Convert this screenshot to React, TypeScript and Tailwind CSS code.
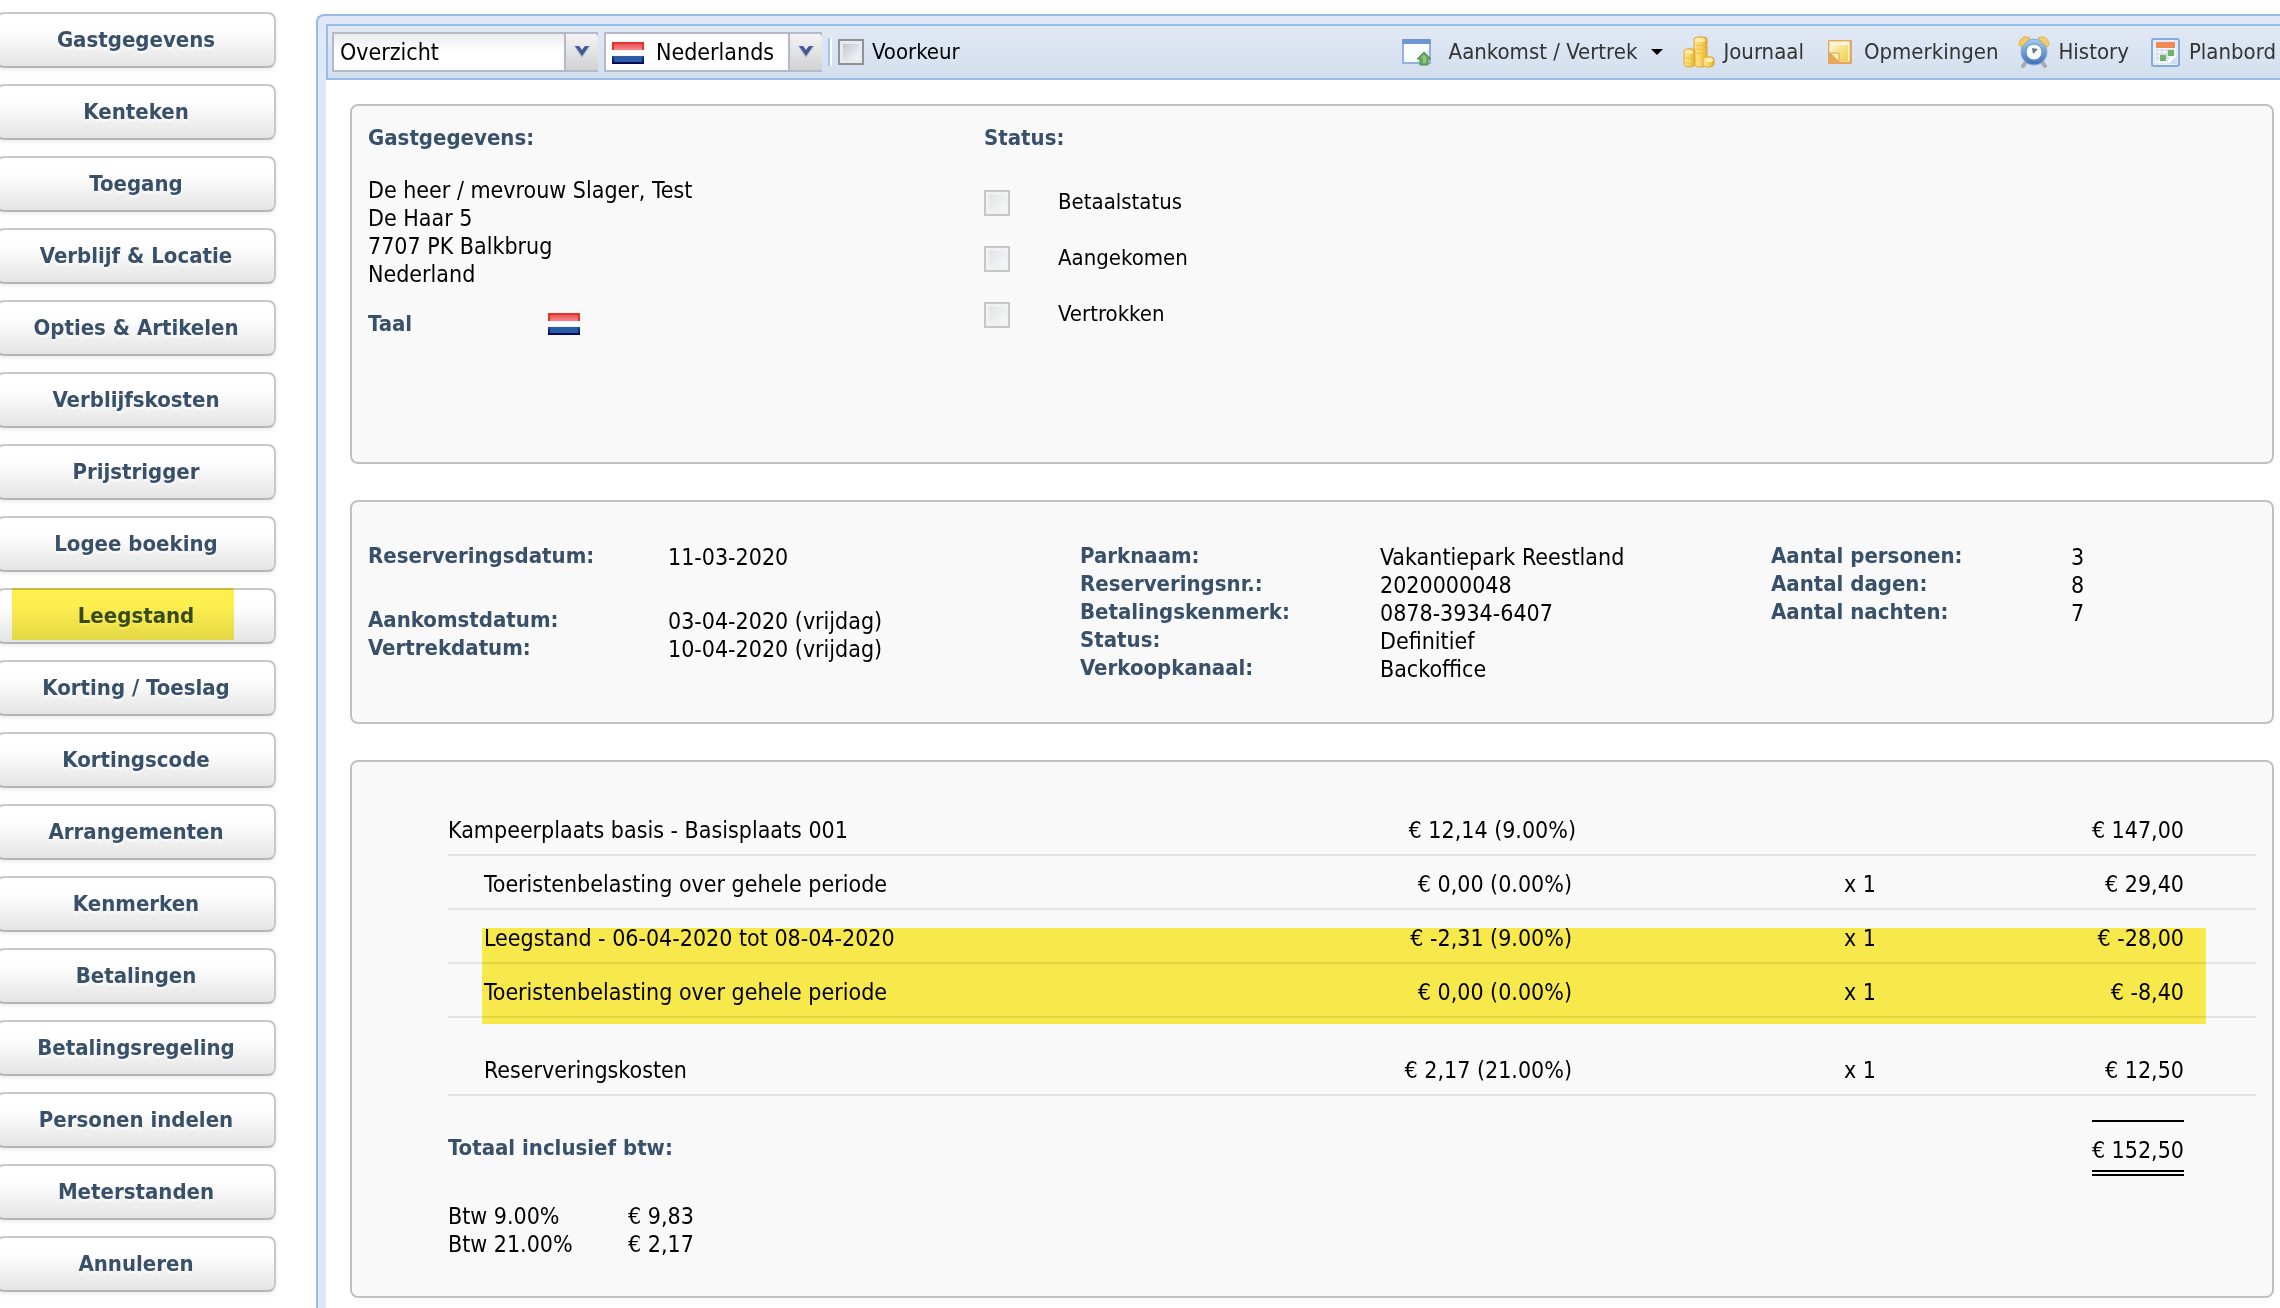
import type { ReactNode } from 'react';

const MENU = [
  'Gastgegevens',
  'Kenteken',
  'Toegang',
  'Verblijf & Locatie',
  'Opties & Artikelen',
  'Verblijfskosten',
  'Prijstrigger',
  'Logee boeking',
  'Leegstand',
  'Korting / Toeslag',
  'Kortingscode',
  'Arrangementen',
  'Kenmerken',
  'Betalingen',
  'Betalingsregeling',
  'Personen indelen',
  'Meterstanden',
  'Annuleren',
];

const STATUSES = ['Betaalstatus', 'Aangekomen', 'Vertrokken'];

const COSTS = [
  { name: 'Kampeerplaats basis - Basisplaats 001', price: '€ 12,14 (9.00%)', count: '', total: '€ 147,00', kind: 'main' },
  { name: 'Toeristenbelasting over gehele periode', price: '€ 0,00 (0.00%)', count: 'x 1', total: '€ 29,40', kind: 'sub' },
  { name: 'Leegstand - 06-04-2020 tot 08-04-2020', price: '€ -2,31 (9.00%)', count: 'x 1', total: '€ -28,00', kind: 'sub' },
  { name: 'Toeristenbelasting over gehele periode', price: '€ 0,00 (0.00%)', count: 'x 1', total: '€ -8,40', kind: 'sub' },
  { name: 'Reserveringskosten', price: '€ 2,17 (21.00%)', count: 'x 1', total: '€ 12,50', kind: 'extra' },
];

const VAT = [
  ['Btw 9.00%', '€ 9,83'],
  ['Btw 21.00%', '€ 2,17'],
];

function Flag() {
  return (
    <svg width="32" height="22" viewBox="0 0 32 22" role="img" aria-label="Nederlands">
      <defs>
        <linearGradient id="flagBlue" x1="0" y1="0" x2="0" y2="1">
          <stop offset="0" stopColor="#1d4c94" />
          <stop offset="1" stopColor="#00004f" />
        </linearGradient>
        <linearGradient id="flagShine" x1="0" y1="0" x2="0" y2="1">
          <stop offset="0" stopColor="#e9535a" />
          <stop offset="1" stopColor="#f28a8c" />
        </linearGradient>
      </defs>
      <rect width="32" height="8" fill="#e23427" />
      <rect y="8" width="32" height="6" fill="#f3f3f6" />
      <rect y="14" width="32" height="8" fill="url(#flagBlue)" />
      <rect x="2" y="2" width="28" height="6" fill="url(#flagShine)" />
      <rect x="2" y="9" width="28" height="4" fill="#fff" />
      <rect x="2" y="14" width="28" height="6" fill="#2c5ca6" />
    </svg>
  );
}

function WindowIcon() {
  return (
    <svg width="32" height="32" viewBox="0 0 32 32" aria-hidden="true">
      <rect x="1" y="3" width="29" height="25" rx="1" fill="#8fb0e0" />
      <rect x="1" y="3" width="29" height="5" rx="1" fill="#6f96d4" />
      <rect x="3" y="8" width="25" height="18" fill="#fbfcfe" />
      <path d="M15 26 28 13v13z" fill="#e3e9f5" />
      <path d="m23 16 7 7h-3v6h-8v-6h-3z" fill="#6aaa5e" stroke="#4f8f4b" strokeLinejoin="round" />
      <path d="m23 19 3 3h-1v5h-3v-5h-2z" fill="#93c884" />
    </svg>
  );
}

function CoinsIcon() {
  return (
    <svg width="32" height="32" viewBox="0 0 32 32" aria-hidden="true">
      <defs>
        <linearGradient id="coin" x1="0" x2="1">
          <stop offset="0" stopColor="#fde89a" />
          <stop offset=".6" stopColor="#f6cf52" />
          <stop offset="1" stopColor="#e3a92f" />
        </linearGradient>
      </defs>
      <g fill="url(#coin)" stroke="#e0a436">
        <path d="M11 3v25c0 4 13 4 13 0V3c0-3-13-3-13 0z" />
        <path d="M1 15v13c0 4 11 4 11 0V15c0-3-11-3-11 0z" />
        <path d="M20 23v5c0 4 11 4 11 0v-5c0-3-11-3-11 0z" />
      </g>
      <g fill="none" stroke="#ecc050">
        <path d="M12 8c2 2 9 2 11 0M12 12c2 2 9 2 11 0M12 16c2 2 9 2 11 0" />
        <path d="M2 21c2 2 7 2 9 0M2 26c2 2 7 2 9 0" />
      </g>
      <g fill="#fff0b0">
        <ellipse cx="17" cy="4" rx="5" ry="2" />
        <ellipse cx="6" cy="16" rx="4" ry="2" />
        <ellipse cx="26" cy="24" rx="4" ry="2" />
      </g>
    </svg>
  );
}

function NoteIcon() {
  return (
    <svg width="32" height="32" viewBox="0 0 32 32" aria-hidden="true">
      <defs>
        <linearGradient id="note" x1="0" y1="0" x2="1" y2="1">
          <stop offset="0" stopColor="#fdf3c4" />
          <stop offset="1" stopColor="#f1cf45" />
        </linearGradient>
      </defs>
      <rect x="4" y="4" width="24" height="24" rx="1" fill="#e7a45c" />
      <rect x="5" y="5" width="21" height="21" fill="#f5d3a2" />
      <rect x="6" y="6" width="19" height="19" fill="#fff6dc" />
      <rect x="8" y="9" width="16" height="16" fill="url(#note)" />
      <path d="M5 16 16 27H5z" fill="#e9a659" />
      <path d="M6 17h9v9z" fill="#fdf0b4" stroke="#dda14a" />
    </svg>
  );
}

function ClockIcon() {
  return (
    <svg width="32" height="32" viewBox="0 0 32 32" aria-hidden="true">
      <defs>
        <linearGradient id="clock" x1="0" y1="0" x2="0" y2="1">
          <stop offset="0" stopColor="#a8cbec" />
          <stop offset="1" stopColor="#3a6fb5" />
        </linearGradient>
      </defs>
      <path d="m8 26-3 4M24 26l3 4" stroke="#a9adb3" strokeWidth="4" strokeLinecap="round" />
      <circle cx="16" cy="16" r="13" fill="url(#clock)" stroke="#7fa8d8" />
      <path d="M1 9c0-5 4-9 8-8l3 1-9 9z" fill="#f3cd6b" stroke="#e0b04d" />
      <path d="M31 9c0-5-4-9-8-8l-3 1 9 9z" fill="#f3cd6b" stroke="#e0b04d" />
      <circle cx="16" cy="16" r="8" fill="#f8fafc" stroke="#5f91cc" />
      <path d="m14 12 1 6 5-5z" fill="#6b7683" />
    </svg>
  );
}

function PlannerIcon() {
  return (
    <svg width="32" height="32" viewBox="0 0 32 32" aria-hidden="true">
      <rect x="3" y="3" width="27" height="27" rx="2" fill="#fff" stroke="#86a9de" strokeWidth="2" />
      <rect x="5" y="5" width="23" height="23" fill="#f3f6fc" stroke="#cfddf3" />
      <rect x="7" y="6" width="19" height="6" fill="#f28a55" />
      <path d="M7 14h19M7 18h19M7 22h19M8 13v13M13 13v13M18 13v13M23 13v13" stroke="#c6d2e8" />
      <rect x="19" y="14" width="6" height="6" fill="#6db464" />
      <rect x="11" y="19" width="6" height="6" fill="#6db464" />
      <path d="m20 28 8-8v8z" fill="#c9dbf5" />
      <path d="m20 27 1-6 6-1z" fill="#fff" />
    </svg>
  );
}

function SelectArrow() {
  return (
    <span className="pointer-events-none absolute inset-y-0.5 right-0 flex w-[34px] items-center justify-center rounded-tr border-l-2 border-[#b5b8c8] bg-linear-to-b from-[#f4f4f4] to-[#d2d2d2]">
      <svg width="18" height="14" viewBox="0 0 18 14" aria-hidden="true">
        <path d="M1 1h5l3 4 3-4h5L9 13z" fill="#a9b8d8" />
        <path d="M2 1h4l3 4 3-4h4L9 11z" fill="#3f5a95" />
      </svg>
    </span>
  );
}

function ToolButton({ icon, children }: { icon: ReactNode; children: ReactNode }) {
  return (
    <button type="button" className="flex h-10 items-center gap-2 text-[22px] leading-7 whitespace-nowrap text-[#333]">
      {icon}
      {children}
    </button>
  );
}

function Toolbar() {
  return (
    <div className="flex h-14 items-center justify-between border-y-2 border-l-2 border-[#99bbe8] bg-linear-to-b from-[#e1e8f4] to-[#d3dfee] pr-1 pl-1">
      <div className="flex items-center gap-1.5">
        <div className="relative h-10 w-[266px]">
          <select
            aria-label="Weergave"
            className="h-10 w-full appearance-none border-2 border-[#b5b8c8] bg-white bg-linear-to-b from-[#eaedec] to-white to-50% pl-1.5 text-[23px] leading-7 text-black"
          >
            <option>Overzicht</option>
          </select>
          <SelectArrow />
        </div>
        <div className="relative h-10 w-[218px]">
          <select
            aria-label="Taal"
            className="h-10 w-full appearance-none border-2 border-[#b5b8c8] bg-white pl-[50px] text-[23px] leading-7 text-black"
          >
            <option>Nederlands</option>
          </select>
          <span className="pointer-events-none absolute top-2.5 left-2">
            <Flag />
          </span>
          <SelectArrow />
        </div>
        <span className="h-7 w-1 border-r-2 border-l-2 border-r-white border-l-[#98c8ff]" />
        <label className="flex items-center gap-2 text-[22px] leading-7 text-black">
          <input
            type="checkbox"
            className="size-[26px] appearance-none border-2 border-[#8f9299] bg-linear-to-br from-[#b9bfca] to-white shadow-[inset_0_0_0_3px_#e9eaec]"
          />
          Voorkeur
        </label>
      </div>
      <div className="flex items-center gap-5">
        <ToolButton icon={<WindowIcon />}>
          <span className="pl-2">Aankomst / Vertrek</span>
          <svg width="12" height="8" viewBox="0 0 12 8" className="ml-1.5" aria-hidden="true">
            <path d="M0 1h12L6 7z" fill="#000" />
          </svg>
        </ToolButton>
        <ToolButton icon={<CoinsIcon />}>Journaal</ToolButton>
        <ToolButton icon={<NoteIcon />}>Opmerkingen</ToolButton>
        <ToolButton icon={<ClockIcon />}>History</ToolButton>
        <ToolButton icon={<PlannerIcon />}>Planbord</ToolButton>
      </div>
    </div>
  );
}

function Panel({ className, children }: { className: string; children: ReactNode }) {
  return <section className={`rounded-lg border-2 border-[#c1c1c1] bg-[#f9f9f9] ${className}`}>{children}</section>;
}

function Heading({ children }: { children: ReactNode }) {
  return <h2 className="text-[22px] leading-7 font-bold text-[#385069]">{children}</h2>;
}

function Fields({ items }: { items: string[][] }) {
  return (
    <dl className="grid grid-cols-[300px_1fr] content-start">
      {items.map(([label, value]) => (
        <div key={label} className="contents">
          <dt className="text-[22px] leading-7 font-bold text-[#385069]">{label}</dt>
          <dd className="pt-0.5 leading-[26px] whitespace-nowrap">{value}</dd>
        </div>
      ))}
    </dl>
  );
}

function GuestPanel() {
  return (
    <Panel className="grid min-h-[360px] grid-cols-[616fr_1288fr] pt-[18px] pl-4">
      <div>
        <Heading>Gastgegevens:</Heading>
        <address className="mt-6 leading-7 not-italic">
          De heer / mevrouw Slager, Test
          <br />
          De Haar 5
          <br />
          7707 PK Balkbrug
          <br />
          Nederland
        </address>
        <div className="mt-[22px] grid grid-cols-[180px_1fr] items-center">
          <Heading>Taal</Heading>
          <Flag />
        </div>
      </div>
      <div>
        <Heading>Status:</Heading>
        <div className="mt-9 flex flex-col items-start gap-7">
          {STATUSES.map((s) => (
            <label key={s} className="flex items-end gap-12 text-[22px] leading-7">
              <input
                type="checkbox"
                disabled
                className="size-[26px] appearance-none border-2 border-[#c6c6c6] bg-linear-to-br from-[#dcdfe4] to-[#fbfbfb] shadow-[inset_0_0_0_3px_#f1f1f1]"
              />
              {s}
            </label>
          ))}
        </div>
      </div>
    </Panel>
  );
}

function BookingPanel() {
  return (
    <Panel className="grid min-h-56 grid-cols-[712fr_691fr_501fr] pt-10 pl-4">
      <div className="flex flex-col gap-9">
        <Fields items={[['Reserveringsdatum:', '11-03-2020']]} />
        <Fields
          items={[
            ['Aankomstdatum:', '03-04-2020 (vrijdag)'],
            ['Vertrekdatum:', '10-04-2020 (vrijdag)'],
          ]}
        />
      </div>
      <Fields
        items={[
          ['Parknaam:', 'Vakantiepark Reestland'],
          ['Reserveringsnr.:', '2020000048'],
          ['Betalingskenmerk:', '0878-3934-6407'],
          ['Status:', 'Definitief'],
          ['Verkoopkanaal:', 'Backoffice'],
        ]}
      />
      <Fields
        items={[
          ['Aantal personen:', '3'],
          ['Aantal dagen:', '8'],
          ['Aantal nachten:', '7'],
        ]}
      />
    </Panel>
  );
}

const CELL = 'border-b-2 border-[#e4e4e4] pb-2.5 leading-7';

function CostsPanel() {
  return (
    <Panel className="pt-10 pr-4 pb-[38px] pl-24">
      <div className="relative">
        <table className="w-full border-separate border-spacing-0">
          <tbody>
            {COSTS.map((c, i) => {
              const top = c.kind === 'extra' ? 'pt-[38px]' : 'pt-3.5';
              const isMain = c.kind === 'main';
              return (
                <tr key={i}>
                  <td className={`${CELL} ${top} ${isMain ? '' : 'pl-9'}`}>{c.name}</td>
                  <td className={`${CELL} ${top} w-[300px] text-right ${isMain ? '' : 'pr-1'}`}>{c.price}</td>
                  <td className={`${CELL} ${top} w-[304px] pr-1 text-right`}>{c.count}</td>
                  <td className={`${CELL} ${top} w-[376px] pr-[72px] text-right`}>{c.total}</td>
                </tr>
              );
            })}
          </tbody>
        </table>
        {/* marker over the vacancy lines */}
        <span className="pointer-events-none absolute top-[126px] right-[50px] left-[34px] h-24 bg-[#fdef4e] mix-blend-multiply" />
      </div>
      <div className="mt-6 flex items-start justify-between pr-[72px]">
        <div className="pt-3.5">
          <Heading>Totaal inclusief btw:</Heading>
        </div>
        <div className="border-t-2 border-b-6 border-black pt-3.5 pb-1.5 leading-7 [border-bottom-style:double]">€ 152,50</div>
      </div>
      <dl className="mt-[26px] grid grid-cols-[180px_1fr] leading-7">
        {VAT.map(([label, amount]) => (
          <div key={label} className="contents">
            <dt>{label}</dt>
            <dd>{amount}</dd>
          </div>
        ))}
      </dl>
    </Panel>
  );
}

function Sidebar() {
  return (
    <nav className="-ml-1 flex w-[280px] shrink-0 flex-col gap-4 pt-3">
      {MENU.map((item) => (
        <button
          key={item}
          type="button"
          className="relative h-14 rounded-lg border-2 border-[#c8c8c8] border-b-[#b5b5b5] bg-linear-to-b from-white from-30% to-[#e4e4e4] text-[22px] leading-7 font-bold text-[#385069] shadow-[0_2px_4px_rgba(0,0,0,0.08)] [text-shadow:0_2px_2px_#fff]"
        >
          {item}
          {item === 'Leegstand' && (
            <span className="pointer-events-none absolute -top-0.5 right-10 bottom-0.5 left-3.5 bg-[#fdef4e] mix-blend-multiply" />
          )}
        </button>
      ))}
    </nav>
  );
}

export default function App() {
  return (
    <div className="flex min-h-screen gap-10 overflow-hidden bg-white font-['DejaVu_Sans_Condensed','Noto_Sans',sans-serif] text-[23px] text-black">
      <Sidebar />
      <main className="mt-3.5 min-w-0 flex-1 rounded-tl-lg border-t-2 border-l-2 border-[#99bbe8] bg-[#dfe8f6] pt-2 pl-2">
        <div className="flex h-full flex-col bg-white">
          <Toolbar />
          <div className="flex flex-col gap-9 pt-6 pr-1.5 pb-2.5 pl-6">
            <GuestPanel />
            <BookingPanel />
            <CostsPanel />
          </div>
        </div>
      </main>
    </div>
  );
}
